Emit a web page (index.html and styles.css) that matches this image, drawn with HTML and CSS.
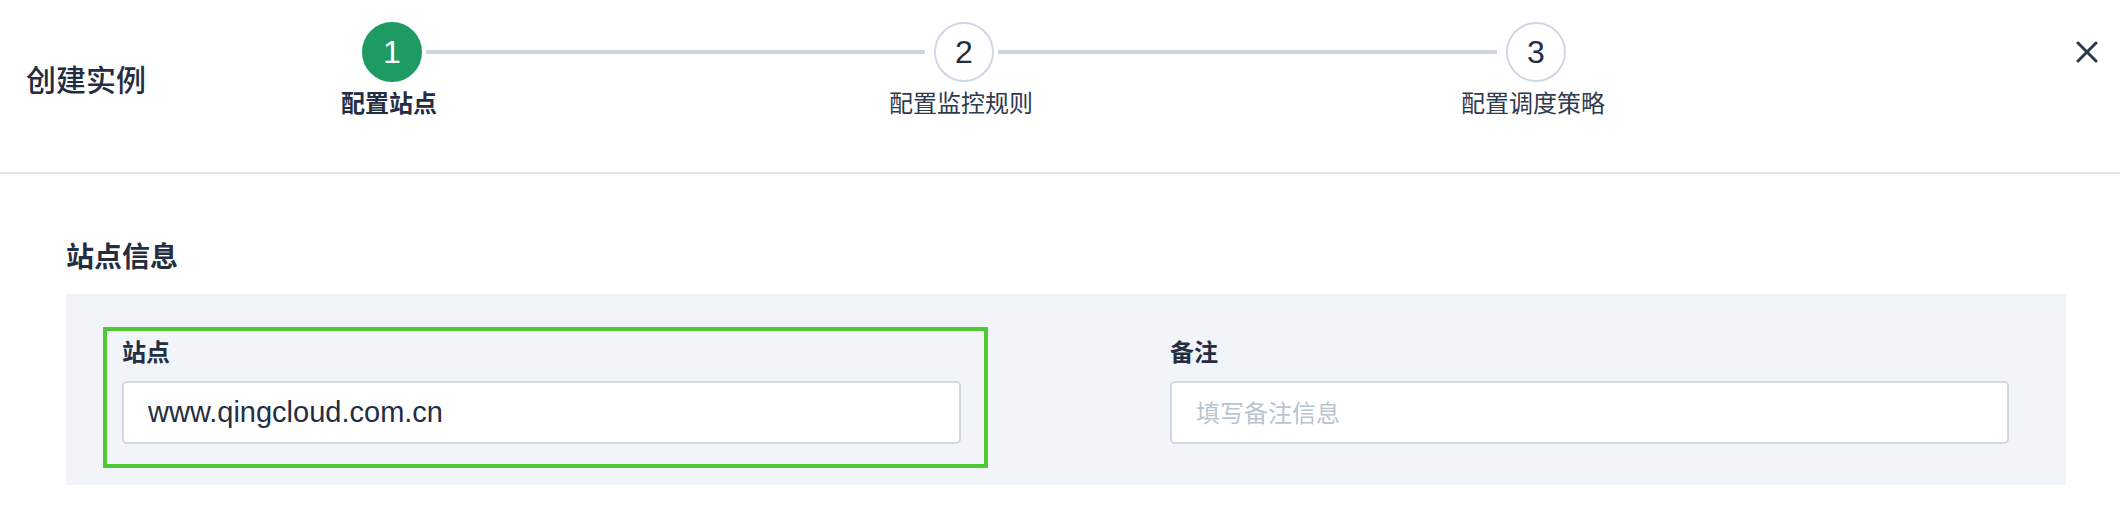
FILE: index.html
```html
<!DOCTYPE html>
<html lang="zh-CN">
<head>
<meta charset="utf-8">
<title>创建实例</title>
<link rel="stylesheet" href="styles.css">
</head>
<body>
<div class="modal">
  <header class="modal-header">
    <h1 class="modal-title">创建实例</h1>
    <div class="steps">
      <div class="step step-active">
        <div class="step-circle">1</div>
        <div class="step-label">配置站点</div>
      </div>
      <div class="step-line"></div>
      <div class="step">
        <div class="step-circle">2</div>
        <div class="step-label">配置监控规则</div>
      </div>
      <div class="step-line"></div>
      <div class="step">
        <div class="step-circle">3</div>
        <div class="step-label">配置调度策略</div>
      </div>
    </div>
    <div class="spacer"></div>
    <button class="close-btn" aria-label="关闭">
      <svg width="22" height="22" viewBox="0 0 22 22"><path d="M2 2 L20 20 M20 2 L2 20" stroke="#2b3a4f" stroke-width="3" stroke-linecap="round" fill="none"/></svg>
    </button>
  </header>
  <main class="modal-body">
    <h2 class="section-title">站点信息</h2>
    <div class="panel">
      <div class="field field-highlight">
        <label class="field-label">站点</label>
        <input class="field-input" type="text" value="www.qingcloud.com.cn">
      </div>
      <div class="field">
        <label class="field-label">备注</label>
        <input class="field-input" type="text" placeholder="填写备注信息">
      </div>
    </div>
  </main>
</div>
</body>
</html>
```

FILE: styles.css
```css
* { box-sizing: border-box; }

body {
  margin: 0;
  background: #ffffff;
  font-family: "Liberation Sans", "Noto Sans CJK SC", sans-serif;
  color: #242e42;
}

.modal-header {
  display: flex;
  align-items: flex-start;
  height: 174px;
  padding: 22px 22px 0 26px;
  border-bottom: 2px solid #dfe5ec;
}

.modal-title {
  width: 336px;
  margin: 38px 0 0 0;
  font-size: 30px;
  line-height: 42px;
  font-weight: 500;
  color: #242e42;
}

.steps {
  display: flex;
  align-items: flex-start;
  width: 1204px;
}

.step {
  width: 60px;
  display: flex;
  flex-direction: column;
  align-items: center;
}

.step-circle {
  width: 60px;
  height: 60px;
  border-radius: 50%;
  border: 2px solid #cfd8e3;
  background: #ffffff;
  display: flex;
  align-items: center;
  justify-content: center;
  font-size: 32px;
  color: #242e42;
}

.step-active .step-circle {
  background: #1e9b62;
  border-color: #1e9b62;
  color: #ffffff;
}

.step-label {
  width: 220px;
  margin-top: 6px;
  text-align: center;
  font-size: 24px;
  line-height: 32px;
  color: #2f3a4e;
  white-space: nowrap;
  transform: translateX(-3px);
}

.step-active .step-label {
  font-weight: 700;
  color: #242e42;
}

.step-line {
  flex: 1;
  height: 4px;
  margin: 28px 9px 0 4px;
  background: #cdd6e1;
}

.spacer { flex: 1; }

.close-btn {
  margin-top: 19px;
  padding: 0;
  border: 0;
  background: transparent;
  width: 22px;
  height: 22px;
  cursor: pointer;
}

.close-btn svg { display: block; }

.modal-body {
  padding: 64px 54px 0 66px;
}

.section-title {
  margin: 0 0 16px 0;
  font-size: 28px;
  line-height: 40px;
  font-weight: 700;
  color: #242e42;
}

.panel {
  display: grid;
  grid-template-columns: 839px 839px;
  column-gap: 209px;
  padding: 43px 56px 41px 56px;
  background: #f1f4f8;
}

.field {
  position: relative;
  display: flex;
  flex-direction: column;
}

.field-highlight::after {
  content: "";
  position: absolute;
  top: -10px;
  left: -19px;
  right: -27px;
  bottom: -24px;
  border: 4px solid #4ec934;
  pointer-events: none;
}

.field-label {
  font-size: 24px;
  line-height: 32px;
  font-weight: 700;
  color: #242e42;
  margin-bottom: 12px;
}

.field-input {
  height: 63px;
  width: 100%;
  padding: 0 24px;
  border: 2px solid #cfd8e3;
  border-radius: 5px;
  background: #ffffff;
  font-family: "Liberation Sans", "Noto Sans CJK SC", sans-serif;
  font-size: 29px;
  color: #242e42;
  outline: none;
}

.field-input::placeholder {
  color: #b8c4d2;
  font-size: 24px;
}
```
